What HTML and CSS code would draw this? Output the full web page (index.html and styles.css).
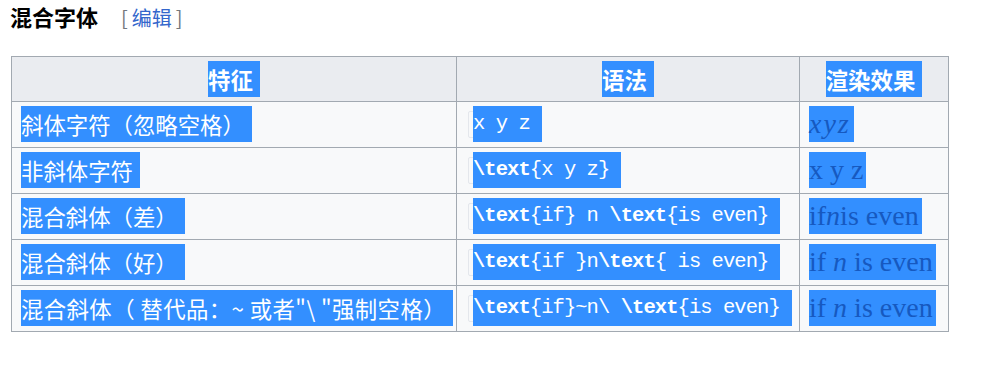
FILE: index.html
```html
<!DOCTYPE html>
<html lang="zh">
<head>
<meta charset="utf-8">
<title>混合字体</title>
<link rel="stylesheet" href="styles.css">
</head>
<body>
<div class="page">
  <h3 class="heading">
    <span class="title">混合字体</span>
    <span class="edit"><span class="br">[</span><a class="edit-link" href="#">编辑</a><span class="br">]</span></span>
  </h3>
  <table class="wikitable">
    <colgroup>
      <col class="col-a">
      <col class="col-b">
      <col class="col-c">
    </colgroup>
    <thead>
      <tr>
        <th><span class="hl">特征</span></th>
        <th><span class="hl">语法</span></th>
        <th><span class="hl">渲染效果</span></th>
      </tr>
    </thead>
    <tbody>
      <tr>
        <td><span class="hl">斜体字符（忽略空格）</span></td>
        <td><code class="tex"><span class="hl code-hl">x y z</span></code></td>
        <td><span class="hl math"><i class="mi">xyz</i></span></td>
      </tr>
      <tr>
        <td><span class="hl">非斜体字符</span></td>
        <td><code class="tex"><span class="hl code-hl"><b>\text</b>{x y z}</span></code></td>
        <td><span class="hl math">x y z</span></td>
      </tr>
      <tr>
        <td><span class="hl">混合斜体（差）</span></td>
        <td><code class="tex"><span class="hl code-hl"><b>\text</b>{if} n <b>\text</b>{is even}</span></code></td>
        <td><span class="hl math">if<i>n</i>is even</span></td>
      </tr>
      <tr>
        <td><span class="hl">混合斜体（好）</span></td>
        <td><code class="tex"><span class="hl code-hl"><b>\text</b>{if }n<b>\text</b>{ is even}</span></code></td>
        <td><span class="hl math">if <i>n</i> is even</span></td>
      </tr>
      <tr>
        <td><span class="hl hl-mixed">混合斜体（ 替代品：~ 或者"\ "强制空格）</span></td>
        <td><code class="tex"><span class="hl code-hl"><b>\text</b>{if}~n\ <b>\text</b>{is even}</span></code></td>
        <td><span class="hl math">if <i>n</i> is even</span></td>
      </tr>
    </tbody>
  </table>
</div>
</body>
</html>
```
FILE: styles.css
```css
* { box-sizing: border-box; }

body {
  margin: 0;
  background: #ffffff;
  color: #202122;
  font-family: "Noto Sans CJK SC", "Noto Sans", sans-serif;
}

.page {
  padding: 0 0 0 10px;
}

.heading {
  margin: 0 0 22px 0;
  display: flex;
  align-items: baseline;
  font-size: 22px;
  line-height: 32px;
  font-weight: bold;
  color: #000000;
}

.edit {
  margin-left: 23px;
  display: flex;
  align-items: baseline;
  gap: 4px;
  font-size: 20px;
  font-weight: normal;
}

.br { color: #72777d; }

.edit-link {
  color: #3366cc;
  text-decoration: none;
}

.wikitable {
  margin-left: 1px;
  border-collapse: collapse;
  table-layout: fixed;
  width: 937px;
  font-size: 22.4px;
  line-height: 36px;
}

.col-a { width: 445px; }
.col-b { width: 343px; }
.col-c { width: 149px; }

.wikitable th,
.wikitable td {
  border: 1px solid #a2a9b1;
  white-space: nowrap;
  overflow: visible;
}

.wikitable th {
  background: #eaecf0;
  text-align: center;
  font-weight: bold;
  padding: 4px 9px 4px 9px;
}

.wikitable td {
  background: #f8f9fa;
  text-align: left;
  padding: 4px 9px 5px 9px;
}

.hl {
  display: inline-block;
  vertical-align: top;
  height: 36px;
  line-height: 36px;
  background: #338fff;
  color: #ffffff;
  padding-right: 7px;
}

.wikitable th .hl {
  padding-right: 7px;
}

.hl-mixed {
  letter-spacing: 0.4px;
}

.tex {
  display: inline-block;
  vertical-align: top;
  margin-top: 5px;
  margin-left: 2px;
  height: 27px;
  padding: 0 4px;
  border: 1px solid #e4e7ec;
  border-radius: 2px;
  background: #f8f9fa;
  font-family: "Liberation Mono", monospace;
  font-size: 20.5px;
  letter-spacing: -0.94px;
  white-space: pre;
}

.code-hl {
  margin-top: -6px;
  margin-right: -12px;
  padding-right: 12px;
  font-family: "Liberation Mono", monospace;
  font-size: 20.5px;
  letter-spacing: -0.94px;
}

.code-hl b { font-weight: bold; }

.math {
  font-family: "Liberation Serif", serif;
  font-size: 28px;
  color: #1659c0;
  padding-right: 3px;
}

.math i { font-style: italic; }

.math .mi { letter-spacing: 2px; }
```
